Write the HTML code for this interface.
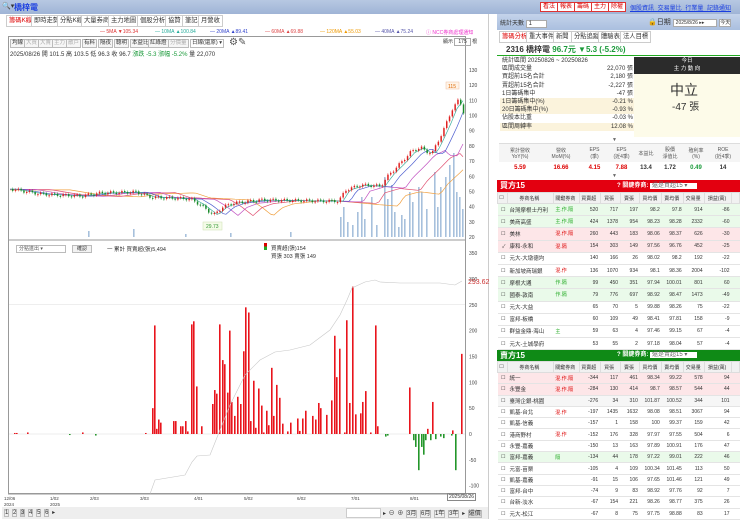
<!DOCTYPE html>
<html><head><meta charset="utf-8">
<style>
*{margin:0;padding:0;box-sizing:border-box}
body{width:740px;height:519px;overflow:hidden;background:#fff;font-family:"Liberation Sans","Noto Sans CJK TC",sans-serif;font-size:6px;color:#333;position:relative}
.a{position:absolute;white-space:nowrap}
.top{left:0;top:0;width:740px;height:14px;background:linear-gradient(#b7c8e2,#9fb4d6)}
.tab{position:absolute;top:15px;height:12px;border:1px solid #ccc;background:#fff;font-size:6.3px;line-height:10px;padding:0 2px}
.rb{position:absolute;top:2px;height:10px;border:1px solid #d33;background:#fff;color:#d00;font-size:6px;line-height:8px;padding:0 2px}
.tb{position:absolute;top:39px;height:9px;border:1px solid #bbb;background:#f6f6f6;font-size:5.5px;line-height:7px;padding:0 1px}
table{border-collapse:collapse;font-size:5px}
.bt td{height:12.2px;border-bottom:1px solid #e4e4e4;text-align:right;padding-right:2px}
.st td{height:11.3px;border-bottom:1px solid #e4e4e4;text-align:right;padding-right:2px}
td.n{text-align:left;padding-left:2px;font-size:5.5px}
td.k{text-align:left;padding-left:2px;color:#d00}
.hd td{height:11px;background:#f1f1f1;text-align:center;border:1px solid #ddd}
</style></head><body>
<div class="a top"></div>
<div class="a" style="left:2px;top:2px;font-size:7px;color:#333">🔍▾</div>
<div class="a" style="left:14px;top:2px;font-size:8px;color:#1a3ee0;font-weight:bold">橋梓電</div>
<div class="rb" style="left:540px">看法</div><div class="rb" style="left:557px">報表</div><div class="rb" style="left:574px">籌碼</div><div class="rb" style="left:591px">主力</div><div class="rb" style="left:608px">除權</div>
<div class="a" style="left:630px;top:3px;font-size:6px;color:#1a3ee0;text-decoration:underline;word-spacing:2px">個股資訊 交易量比 行業量 記錄通知</div>

<div class="tab" style="left:6px;color:#d00">籌碼K線</div><div class="tab" style="left:31px">即時走勢</div><div class="tab" style="left:57px">分點K線</div><div class="tab" style="left:81px">大量券商</div><div class="tab" style="left:108px">主力地圖</div><div class="tab" style="left:137px">個股分析</div><div class="tab" style="left:165px">協贊</div><div class="tab" style="left:182px">筆記</div><div class="tab" style="left:198px">月營收</div>
<div class="a" style="left:100px;top:29px;font-size:5px;color:#d33">— 5MA ▼105.34</div>
<div class="a" style="left:155px;top:29px;font-size:5px;color:#2a9">— 10MA ▲100.84</div>
<div class="a" style="left:210px;top:29px;font-size:5px;color:#34c">— 20MA ▲89.41</div>
<div class="a" style="left:265px;top:29px;font-size:5px;color:#d44">— 60MA ▲69.88</div>
<div class="a" style="left:320px;top:29px;font-size:5px;color:#e90">— 120MA ▲55.03</div>
<div class="a" style="left:375px;top:29px;font-size:5px;color:#55a">— 40MA ▲75.24</div>
<div class="a" style="left:426px;top:29px;font-size:5px;color:#e3c">ⓘ NCC券商處理通知</div>
<div class="a" style="left:8px;top:36px;width:458px;height:458px;border:1px solid #999;border-right:none"></div>
<div class="a" style="left:465px;top:36px;width:1px;height:458px;background:#999"></div>
<div class="a" style="left:488px;top:14px;width:1px;height:505px;background:#ccc"></div>
<div class="tb" style="left:10px">均線</div><div class="tb" style="left:24px;color:#aaa">大買</div><div class="tb" style="left:38px;color:#aaa">大賣</div><div class="tb" style="left:52px;color:#aaa">主力</div><div class="tb" style="left:66px;color:#aaa">散戶</div><div class="tb" style="left:82px">有料</div><div class="tb" style="left:98px">隔夜</div><div class="tb" style="left:114px">聰明</div><div class="tb" style="left:130px">本益比</div><div class="tb" style="left:148px">紅綠燈</div><div class="tb" style="left:168px;color:#aaa">分價量</div><div class="tb" style="left:190px;width:34px;background:#fff">日線(還原) ▾</div>
<div class="a" style="left:229px;top:37px;font-size:10px;color:#555">⚙✎</div>
<div class="a" style="left:443px;top:38px;font-size:5px">顯示 <span style="border:1px solid #aaa;padding:0 3px">175</span> 根</div>
<div class="a" style="left:10px;top:49px;font-size:6px">2025/08/26 開 101.5 高 103.5 低 96.3 收 96.7 <span style="color:#1a9a3a">漲跌 -5.3 漲幅 -5.2%</span> 量 22,070</div>

<svg class="a" style="left:0;top:0" width="490" height="519" id="c"></svg>

<div class="a" style="left:16px;top:245px;width:50px;height:8px;border:1px solid #bbb;font-size:5px;line-height:6px;padding-left:2px;color:#555">分點進出 ▾</div>
<div class="a" style="left:72px;top:245px;width:20px;height:8px;border:1px solid #bbb;background:#f2f2f2;font-size:5px;line-height:6px;text-align:center">確認</div>
<div class="a" style="left:107px;top:245px;font-size:5.5px">一 累計 買賣超(張)5,494</div>
<div class="a" style="left:264px;top:243px;width:3px;height:7px;background:linear-gradient(#d00 50%,#2a2 50%)"></div>
<div class="a" style="left:271px;top:244px;font-size:5.5px">買賣超(張)154</div>
<div class="a" style="left:271px;top:252px;font-size:5.5px">買張 303 賣張 149</div>
<div class="a" style="left:468px;top:279px;font-size:7px;color:#c33">293.62</div>
<div class="a" style="left:447px;top:493px;border:1px solid #888;font-size:5px;padding:0 1px">2025/08/26</div>
<div class="a" style="left:2px;top:507px;width:486px;height:12px;background:#eee"></div>
<div class="a" style="left:4px;top:509px;font-size:6px;word-spacing:1px"><span style="border:1px solid #bbb">1</span> <span style="border:1px solid #bbb">2</span> <span style="border:1px solid #bbb;background:#ccc">3</span> <span style="border:1px solid #bbb">4</span> <span style="border:1px solid #bbb">5</span> <span style="border:1px solid #bbb">6</span> ▸</div>
<div class="a" style="left:346px;top:508px;width:35px;height:10px;background:#fff;border:1px solid #ccc"></div>
<div class="a" style="left:383px;top:508px;font-size:6px;word-spacing:1px">▸ ⊖ ⊕ <span style="border:1px solid #bbb">3月</span> <span style="border:1px solid #bbb">6月</span> <span style="border:1px solid #bbb">1年</span> <span style="border:1px solid #bbb">3年</span> ▸ <span style="border:1px solid #bbb;background:#ddd">還價</span></div>

<!-- right panel -->
<div class="a" style="left:497px;top:14px;width:243px;height:16px;background:linear-gradient(#c4d3ea,#aabfdf)"></div>
<div class="a" style="left:500px;top:18px;font-size:6px">統計天數 <span style="background:#fff;border:1px solid #aaa;padding:0 14px 0 2px">1</span></div>
<div class="a" style="left:648px;top:17px;font-size:7px">🔒日期 <span style="background:#fff;border:1px solid #aaa;font-size:5px;padding:0 12px 0 2px">2025/8/26 ▸▸</span> <span style="background:#fff;border:1px solid #aaa;font-size:5px">今天</span></div>
<div class="tab" style="left:499px;top:31px;color:#d00">籌碼分析</div><div class="tab" style="left:526px;top:31px">重大事件</div><div class="tab" style="left:553px;top:31px">新聞</div><div class="tab" style="left:571px;top:31px">分點追蹤</div><div class="tab" style="left:598px;top:31px">體驗表</div><div class="tab" style="left:620px;top:31px">法人目標</div>
<div class="a" style="left:497px;top:43px;width:243px;height:13px;border-bottom:1px solid #2a2"></div>
<div class="a" style="left:506px;top:44px;font-size:8px;font-weight:bold">2316 橋梓電 <span style="color:#1a9a3a">96.7元 ▼5.3 (-5.2%)</span></div>
<div class="a" style="left:500px;top:57px;width:135px;height:80px;font-size:6px;line-height:8.2px">
<div style="display:flex;justify-content:space-between;padding:0 2px"><span>統計區間 20250826 ~ 20250826</span></div>
<div style="display:flex;justify-content:space-between;padding:0 2px"><span>區間成交量</span><span>22,070 張</span></div>
<div style="display:flex;justify-content:space-between;padding:0 2px"><span>買超前15名合計</span><span>2,180 張</span></div>
<div style="display:flex;justify-content:space-between;padding:0 2px"><span>賣超前15名合計</span><span>-2,227 張</span></div>
<div style="display:flex;justify-content:space-between;padding:0 2px"><span>1日籌碼集中</span><span>-47 張</span></div>
<div style="display:flex;justify-content:space-between;padding:0 2px;background:#fbf3dc"><span>1日籌碼集中(%)</span><span>-0.21 %</span></div>
<div style="display:flex;justify-content:space-between;padding:0 2px;background:#fbf3dc"><span>20日籌碼集中(%)</span><span>-0.93 %</span></div>
<div style="display:flex;justify-content:space-between;padding:0 2px"><span>佔股本比重</span><span>-0.03 %</span></div>
<div style="display:flex;justify-content:space-between;padding:0 2px;background:#fbf3dc"><span>區間周轉率</span><span>12.08 %</span></div>
</div>
<div class="a" style="left:634px;top:57px;width:106px;height:17px;background:#2b2b2b;color:#fff;font-size:5.5px;text-align:center;line-height:8px">今日<br>主 力 動 向</div>
<div class="a" style="left:634px;top:74px;width:106px;height:63px;background:#fdfbe9"></div>
<div class="a" style="left:670px;top:80px;font-size:14px;color:#333">中立</div>
<div class="a" style="left:672px;top:98px;font-size:10px;color:#333">-47 張</div>
<div class="a" style="left:612px;top:137px;font-size:5px;color:#666">▼</div>
<div class="a" style="left:499px;top:143px;width:241px;height:30px;border-top:1px solid #ddd;font-size:5px">
<div style="display:flex;text-align:center;color:#555;height:18px;align-items:center;background:#f5f5f5"><span style="width:42px">累計營收<br>YoY(%)</span><span style="width:40px">營收<br>MoM(%)</span><span style="width:27px">EPS<br>(季)</span><span style="width:27px">EPS<br>(近4季)</span><span style="width:22px">本益比</span><span style="width:26px">股價<br>淨值比</span><span style="width:26px">殖利率<br>(%)</span><span style="width:28px">ROE<br>(近4季)</span></div>
<div style="display:flex;text-align:center;font-weight:bold;font-size:6px;height:11px;align-items:center"><span style="width:42px;color:#d00">5.59</span><span style="width:40px;color:#d00">16.66</span><span style="width:27px;color:#d00">4.15</span><span style="width:27px;color:#d00">7.88</span><span style="width:22px">13.4</span><span style="width:26px">1.72</span><span style="width:26px;color:#1a9a3a">0.49</span><span style="width:28px">14</span></div>
</div>
<div class="a" style="left:612px;top:173px;font-size:5px;color:#666">▼</div>

<div class="a" style="left:497px;top:180px;width:243px;height:12px;background:#e30010;color:#fff;font-size:8px;font-weight:bold;padding-left:3px;line-height:12px">買方15<span style="position:absolute;left:120px;font-size:6px">? 關鍵券商: <span style="background:#fff;color:#666;font-weight:normal;padding:0 10px 0 2px">還是買超15 ▾</span></span></div>
<div class="a" style="left:497px;top:192px"><table class="bt" style="width:243px">
<colgroup><col style="width:10px"><col style="width:46px"><col style="width:26px"><col style="width:21px"><col style="width:20px"><col style="width:20px"><col style="width:22px"><col style="width:22px"><col style="width:21px"><col style="width:27px"><col style="width:8px"></colgroup>
<tr class="hd"><td>☐</td><td>券商名稱</td><td>關鍵券商</td><td>買賣超</td><td>買張</td><td>賣張</td><td>買均價</td><td>賣均價</td><td>交易量</td><td>損益(萬)</td><td></td></tr>
<tr style="background:#eafaea"><td>☐</td><td class="n">台灣摩根士丹利</td><td class="k" style="color:#2a2">主.作.隔</td><td>520</td><td>717</td><td>197</td><td>98.2</td><td>97.8</td><td>914</td><td>-86</td><td></td></tr>
<tr style="background:#eafaea"><td>☐</td><td class="n">美商高盛</td><td class="k" style="color:#2a2">主.作.隔</td><td>424</td><td>1378</td><td>954</td><td>98.23</td><td>98.28</td><td>2332</td><td>-60</td><td></td></tr>
<tr style="background:#fde6e8"><td>☐</td><td class="n">美林</td><td class="k">混.作.隔</td><td>260</td><td>443</td><td>183</td><td>98.06</td><td>98.37</td><td>626</td><td>-30</td><td></td></tr>
<tr style="background:#fde6e8"><td>✓</td><td class="n">康和-永和</td><td class="k">混.隔</td><td>154</td><td>303</td><td>149</td><td>97.56</td><td>96.76</td><td>452</td><td>-25</td><td></td></tr>
<tr><td>☐</td><td class="n">元大-大墩德均</td><td></td><td>140</td><td>166</td><td>26</td><td>98.02</td><td>98.2</td><td>192</td><td>-22</td><td></td></tr>
<tr><td>☐</td><td class="n">新加坡商瑞銀</td><td class="k">混.作</td><td>136</td><td>1070</td><td>934</td><td>98.1</td><td>98.36</td><td>2004</td><td>-102</td><td></td></tr>
<tr style="background:#eafaea"><td>☐</td><td class="n">摩根大通</td><td class="k" style="color:#2a2">作.隔</td><td>99</td><td>450</td><td>351</td><td>97.94</td><td>100.01</td><td>801</td><td>60</td><td></td></tr>
<tr style="background:#eafaea"><td>☐</td><td class="n">國泰-敦南</td><td class="k" style="color:#2a2">作.隔</td><td>79</td><td>776</td><td>697</td><td>98.92</td><td>98.47</td><td>1473</td><td>-49</td><td></td></tr>
<tr><td>☐</td><td class="n">元大-大益</td><td></td><td>65</td><td>70</td><td>5</td><td>99.88</td><td>98.26</td><td>75</td><td>-22</td><td></td></tr>
<tr><td>☐</td><td class="n">富邦-板橋</td><td></td><td>60</td><td>109</td><td>49</td><td>98.41</td><td>97.81</td><td>158</td><td>-9</td><td></td></tr>
<tr><td>☐</td><td class="n">群益金鼎-海山</td><td class="k" style="color:#2a2">主</td><td>59</td><td>63</td><td>4</td><td>97.46</td><td>99.15</td><td>67</td><td>-4</td><td></td></tr>
<tr><td>☐</td><td class="n">元大-土城學府</td><td></td><td>53</td><td>55</td><td>2</td><td>97.18</td><td>98.04</td><td>57</td><td>-4</td><td></td></tr>
<tr><td>☐</td><td class="n">群益金鼎-東巖</td><td></td><td>48</td><td>52</td><td>4</td><td>99.41</td><td>99.2</td><td>56</td><td>-14</td><td></td></tr>
</table></div>

<div class="a" style="left:497px;top:350px;width:243px;height:11px;background:#0f8a16;color:#fff;font-size:8px;font-weight:bold;padding-left:3px;line-height:11px">賣方15<span style="position:absolute;left:120px;font-size:6px">? 關鍵券商: <span style="background:#fff;color:#666;font-weight:normal;padding:0 10px 0 2px">還是賣超15 ▾</span></span></div>
<div class="a" style="left:497px;top:361px"><table class="st" style="width:243px">
<colgroup><col style="width:10px"><col style="width:46px"><col style="width:26px"><col style="width:21px"><col style="width:20px"><col style="width:20px"><col style="width:22px"><col style="width:22px"><col style="width:21px"><col style="width:27px"><col style="width:8px"></colgroup>
<tr class="hd"><td style="height:10px">☐</td><td>券商名稱</td><td>關鍵券商</td><td>買賣超</td><td>買張</td><td>賣張</td><td>買均價</td><td>賣均價</td><td>交易量</td><td>損益(萬)</td><td></td></tr>
<tr style="background:#fde6e8"><td>☐</td><td class="n">統一</td><td class="k">混.作.隔</td><td>-344</td><td>117</td><td>461</td><td>98.34</td><td>99.22</td><td>578</td><td>94</td><td></td></tr>
<tr style="background:#fde6e8"><td>☐</td><td class="n">永豐金</td><td class="k">混.作.隔</td><td>-284</td><td>130</td><td>414</td><td>98.7</td><td>98.57</td><td>544</td><td>44</td><td></td></tr>
<tr style="background:#f6f6f6"><td>☐</td><td class="n">臺灣企銀-桃園</td><td></td><td>-276</td><td>34</td><td>310</td><td>101.87</td><td>100.52</td><td>344</td><td>101</td><td></td></tr>
<tr><td>☐</td><td class="n">凱基-台北</td><td class="k">混.作</td><td>-197</td><td>1435</td><td>1632</td><td>98.08</td><td>98.51</td><td>3067</td><td>94</td><td></td></tr>
<tr><td>☐</td><td class="n">凱基-信義</td><td></td><td>-157</td><td>1</td><td>158</td><td>100</td><td>99.37</td><td>159</td><td>42</td><td></td></tr>
<tr><td>☐</td><td class="n">港商野村</td><td class="k">混.作</td><td>-152</td><td>176</td><td>328</td><td>97.97</td><td>97.55</td><td>504</td><td>6</td><td></td></tr>
<tr><td>☐</td><td class="n">永豐-嘉義</td><td></td><td>-150</td><td>13</td><td>163</td><td>97.89</td><td>100.91</td><td>176</td><td>47</td><td></td></tr>
<tr style="background:#eafaea"><td>☐</td><td class="n">富邦-嘉義</td><td class="k" style="color:#2a2">隔</td><td>-134</td><td>44</td><td>178</td><td>97.22</td><td>99.01</td><td>222</td><td>46</td><td></td></tr>
<tr><td>☐</td><td class="n">元富-苗栗</td><td></td><td>-105</td><td>4</td><td>109</td><td>100.34</td><td>101.45</td><td>113</td><td>50</td><td></td></tr>
<tr><td>☐</td><td class="n">凱基-嘉義</td><td></td><td>-91</td><td>15</td><td>106</td><td>97.65</td><td>101.46</td><td>121</td><td>49</td><td></td></tr>
<tr><td>☐</td><td class="n">富邦-台中</td><td></td><td>-74</td><td>9</td><td>83</td><td>98.92</td><td>97.76</td><td>92</td><td>7</td><td></td></tr>
<tr><td>☐</td><td class="n">台新-淡水</td><td></td><td>-67</td><td>154</td><td>221</td><td>98.26</td><td>98.77</td><td>375</td><td>26</td><td></td></tr>
<tr><td>☐</td><td class="n">元大-松江</td><td></td><td>-67</td><td>8</td><td>75</td><td>97.75</td><td>98.88</td><td>83</td><td>17</td><td></td></tr>
</table></div>

<script>
var s=document.getElementById('c'),h='';
function L(x1,y1,x2,y2,c,w){h+='<line x1="'+x1+'" y1="'+y1+'" x2="'+x2+'" y2="'+y2+'" stroke="'+c+'" stroke-width="'+(w||1)+'"/>';}
function T(x,y,t,c,z){h+='<text x="'+x+'" y="'+y+'" font-size="'+(z||5)+'" fill="'+(c||'#444')+'" font-family="Liberation Sans">'+t+'</text>';}
for(var v=20;v<=130;v+=10){var y=237-(v-20)*1.518;T(469,y+2,v);}
L(8,240,465,240,'#999');
var vb=[[88,6],[133,8],[185,3],[230,4],[290,5],[340,20],[343,30],[347,15],[352,12],[357,25],[361,40],[364,18],[371,40],[376,12],[384,60],[387,38],[391,52],[394,25],[398,10],[401,22],[404,18],[409,45],[412,35],[418,50],[421,45],[426,28],[434,65],[437,30],[440,50],[445,60],[449,72],[453,84],[456,45],[459,40],[462,28]];
vb.forEach(function(b){h+='<rect x="'+b[0]+'" y="'+(237-b[1])+'" width="1.6" height="'+b[1]+'" fill="#a7c0dc"/>';});
var kp=[[10,189],[40,194],[80,196],[100,193],[135,192],[150,197],[190,199],[200,205],[213,215],[222,207],[233,203],[260,200],[320,201],[338,201],[345,190],[360,185],[380,186],[388,175],[400,163],[410,152],[420,147],[425,152],[432,152],[438,140],[445,125],[452,108],[458,100],[462,108],[464,118]];
function P(x){for(var i=1;i<kp.length;i++)if(x<=kp[i][0]){var a=kp[i-1],b=kp[i];return a[1]+(b[1]-a[1])*(x-a[0])/(b[0]-a[0]);}return kp[kp.length-1][1];}
function ma(off,lag,col){var d='';for(var x=10;x<=464;x+=3){var y=P(Math.max(10,x-lag))+off*(x>330?(x-330)/40:0.3);d+=(x==10?'M':'L')+x+','+y.toFixed(1);}h+='<path d="'+d+'" fill="none" stroke="'+col+'" stroke-width="0.7"/>';}
ma(3,60,'#f0a040');ma(2,40,'#e05070');ma(1.2,25,'#c050c0');ma(0.6,12,'#5060d0');ma(0.2,5,'#40b0a0');
var pp=P(10);for(var x=12;x<=463;x+=2.8){var y=P(x)+Math.sin(x*1.7)*1.5;var up=y<pp;var t=Math.min(y,pp),bh=Math.max(1,Math.abs(y-pp));L(x+0.7,t-1.5,x+0.7,t+bh+1.5,up?'#d00':'#1a8a2a',0.4);h+='<rect x="'+x+'" y="'+t+'" width="1.5" height="'+bh+'" fill="'+(up?'#e02020':'#1a8a2a')+'"/>';pp=y;}
h+='<rect x="203" y="222" width="19" height="8" fill="#f4fbe8" stroke="#cde0b0" stroke-width="0.5"/>';T(206,228,'29.73','#393',5);
h+='<rect x="446" y="82" width="13" height="7" fill="#fff4e8" stroke="#f0c0a0" stroke-width="0.5"/>';T(448,88,'115','#d60',5);
var z=434,k=0.517;
[350,300,250,200,150,100,50,0,-50,-100].forEach(function(a){var y=z-a*k;T(469,y+2,a);if(a==250||a==0)L(9,y,465,y,'#ddd',0.5);});
var rb=[[14,2],[16,2],[27,3],[82,3],[145,2],[152,50],[154,210],[156,10],[158,28],[160,22],[173,25],[175,25],[180,15],[182,15],[185,25],[187,5],[191,212],[193,218],[196,92],[201,15],[212,58],[214,85],[216,78],[219,212],[222,143],[224,135],[227,80],[229,200],[231,62],[234,35],[237,72],[240,58],[243,160],[245,245],[248,235],[250,25],[253,103],[255,12],[258,88],[261,55],[263,3],[266,45],[268,17],[271,128],[273,35],[276,95],[279,70],[282,20],[287,5],[290,22],[297,30],[299,6],[302,30],[305,45],[312,35],[315,28],[318,60],[320,50],[326,37],[331,65],[334,190],[336,110],[339,165],[344,3],[346,220],[349,60],[352,285],[355,38],[360,40],[362,62],[365,83],[370,3],[375,210],[377,15],[409,90],[427,10],[432,62],[452,7],[461,155],
[69,-2],[95,-3],[385,-5],[387,-3],[413,-12],[415,-25],[418,-70],[421,-25],[423,-40],[425,-12],[430,-12],[435,-10],[440,-5],[443,-8],[451,-3],[455,-70]];
rb.forEach(function(b){var hh=Math.abs(b[1])*k;h+='<rect x="'+b[0]+'" y="'+(b[1]>0?z-hh:z)+'" width="1.6" height="'+hh+'" fill="'+(b[1]>0?'#e8141c':'#23962a')+'"/>';});
h+='<polyline points="9,494 150,494 155,480 185,475 192,462 197,456 210,455 218,435 230,405 245,375 260,360 275,352 290,350 310,345 330,330 340,315 347,300 352,288 365,282 375,280 380,282 400,283 440,283 455,285 462,281" fill="none" stroke="#c8c8c8" stroke-width="0.6"/>';
L(8,494,465,494,'#999');
[['12/06',4,'2024'],['1/02',50,'2025'],['2/03',90],['3/03',140],['4/01',194],['5/02',244],['6/02',297],['7/01',351],['8/01',410]].forEach(function(a){T(a[1],500,a[0],'#444',4.5);if(a[2])T(a[1],506,a[2],'#444',4.5);});
s.innerHTML=h;
</script>
</body></html>
